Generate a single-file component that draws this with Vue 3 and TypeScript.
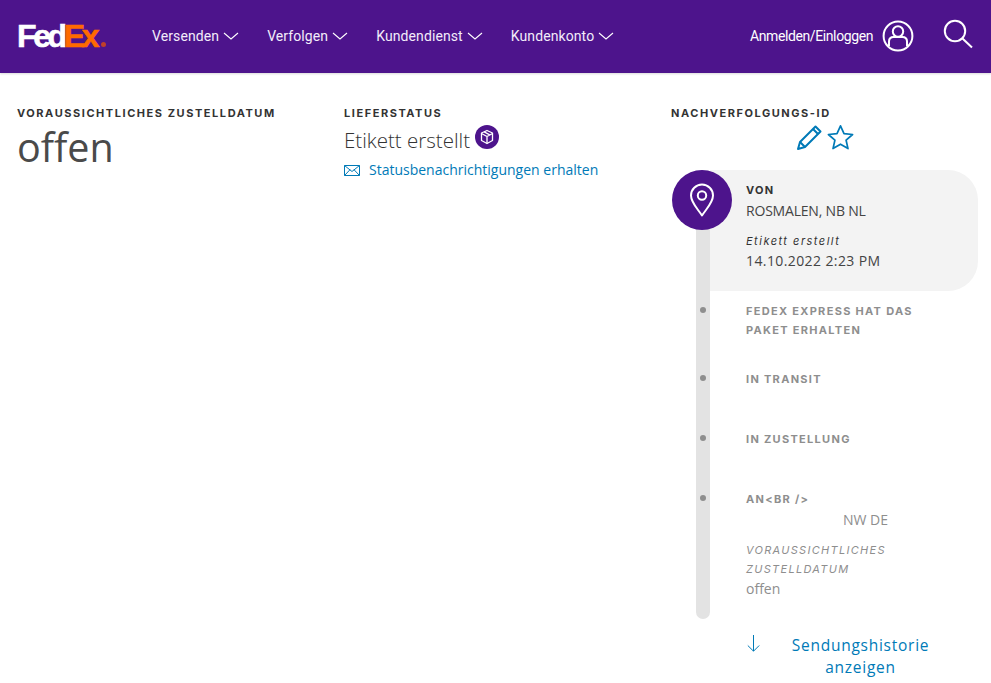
<script setup lang="ts">
const navItems: string[] = ['Versenden', 'Verfolgen', 'Kundendienst', 'Kundenkonto']
</script>

<template>
  <div class="page">
    <header class="header">
      <div class="logo"><span class="fed">Fed</span><span class="ex">Ex</span><span class="reg"></span></div>
      <nav class="nav">
        <a v-for="item in navItems" :key="item" class="nav-item">
          {{ item }}
          <svg width="16" height="8" viewBox="0 0 16 8" fill="none" stroke="#fff" stroke-width="1.1"><path d="M1 1l7 6 7-6" /></svg>
        </a>
      </nav>
      <div class="account">
        <span class="login">Anmelden/Einloggen</span>
        <svg class="user" width="32" height="32" viewBox="0 0 32 32" fill="none" stroke="#fff" stroke-width="2">
          <circle cx="16" cy="16" r="14.4" />
          <circle cx="16" cy="11.5" r="5.2" />
          <path d="M7 26v-4.5c0-3 2.2-4.5 4.6-4.5h8.8c2.400 0 4.600 1.500 4.600 4.500V26" />
        </svg>
        <svg class="search" width="30" height="30" viewBox="0 0 30 30" fill="none" stroke="#fff" stroke-width="2">
          <circle cx="12" cy="12" r="10.200" />
          <path d="M19.500 19.500L29 28.500" />
        </svg>
      </div>
    </header>

    <main class="content">
      <section class="col">
        <h2 class="label">VORAUSSICHTLICHES ZUSTELLDATUM</h2>
        <p class="big">offen</p>
      </section>

      <section class="col">
        <h2 class="label">LIEFERSTATUS</h2>
        <div class="status">
          <span>Etikett erstellt</span>
          <span class="badge">
            <svg width="16" height="16" viewBox="0 0 16 16" fill="none" stroke="#fff" stroke-width="1.300" stroke-linejoin="round">
              <path d="M8 1.500l5.500 2.500v7.500L8 14.500l-5.500-3V4z" />
              <path d="M2.500 4.500L8 7.500l5.500-3M8 7.500v7M5.200 2.900l5.500 3" />
            </svg>
          </span>
        </div>
        <a class="notify">
          <svg width="16" height="11" viewBox="0 0 16 11" fill="none" stroke="#007ab7" stroke-width="1"><path d="M.5.500h15v10H.5zM.5.500L8 6.500l7.500-6M.5 10.500l5.500-5.800M15.500 10.500L10 4.700" /></svg>
          Statusbenachrichtigungen erhalten
        </a>
      </section>

      <section class="col">
        <h2 class="label">NACHVERFOLGUNGS-ID</h2>
        <div class="tools">
          <svg width="27" height="27" viewBox="0 0 27 27" fill="none" stroke="#007ab7" stroke-width="2" stroke-linejoin="round">
            <path d="M2 25l2-7L19.500 2.500l5 5L9 23z" />
            <path d="M4 18l5 5M17 5l5 5" />
          </svg>
          <svg width="27" height="26" viewBox="0 0 27 26" fill="none" stroke="#007ab7" stroke-width="1.700" stroke-linejoin="round">
            <path d="M13.500 1.800l3.500 7.900 8.600.8-6.500 5.700 1.900 8.400-7.500-4.400-7.500 4.400 1.900-8.400-6.500-5.700 8.600-.8z" />
          </svg>
        </div>

        <div class="timeline">
          <div class="pin">
            <svg width="26" height="34" viewBox="0 0 26 34" fill="none" stroke="#fff" stroke-width="2">
              <path d="M13 32.500C8 25 2 19.500 2 12.500a11 11 0 0 1 22 0C24 19.500 18 25 13 32.500z" stroke-linejoin="round" />
              <circle cx="13" cy="12.500" r="4.200" />
            </svg>
          </div>

          <div class="card">
            <h3 class="step-title dark">VON</h3>
            <p class="place">ROSMALEN, NB NL</p>
            <p class="note">Etikett erstellt</p>
            <p class="date">14.10.2022 2:23 PM</p>
          </div>

          <div class="step first">
            <h3 class="step-title">FEDEX EXPRESS HAT DAS<br />PAKET ERHALTEN</h3>
          </div>
          <div class="step">
            <h3 class="step-title">IN TRANSIT</h3>
          </div>
          <div class="step">
            <h3 class="step-title">IN ZUSTELLUNG</h3>
          </div>
          <div class="step last">
            <h3 class="step-title">AN&lt;BR /&gt;</h3>
            <p class="dest">NW DE</p>
            <p class="dest-label">VORAUSSICHTLICHES<br />ZUSTELLDATUM</p>
            <p class="dest-val">offen</p>
          </div>
        </div>

        <div class="history">
          <svg width="13" height="17" viewBox="0 0 13 17" fill="none" stroke="#007ab7" stroke-width="1"><path d="M6.500 0v16M.8 10.500l5.700 5.700 5.700-5.700" /></svg>
          <a class="history-link">Sendungshistorie anzeigen</a>
        </div>
      </section>
    </main>
  </div>
</template>

<style>
html, body { margin: 0; background: #fff; }
</style>

<style scoped>
.page {
  width: 991px;
  height: 683px;
  overflow: hidden;
  font-family: "Open Sans", sans-serif;
  color: #333;
}
.header {
  height: 73px;
  background: #4d148c;
  display: flex;
  align-items: center;
  box-shadow: 0 1px 2px rgba(0, 0, 0, 0.15);
  padding: 0 18px 2px 17px;
  box-sizing: border-box;
  color: #fff;
}
.logo {
  width: 135px;
  font-family: "Liberation Sans", sans-serif;
  font-weight: 700;
  font-size: 32px;
  letter-spacing: -3.400px;
  line-height: 1;
  display: flex;
  align-items: baseline;
  -webkit-text-stroke: 0.6px currentColor;
}
.fed { color: #fff; }
.ex { color: #ff6a00; }
.reg {
  width: 5px;
  height: 5px;
  border-radius: 50%;
  background: #c0402a;
  margin-left: 5px;
}
.nav { display: flex; gap: 28px; }
.nav-item {
  display: flex;
  align-items: center;
  gap: 4px;
  font-family: Roboto, sans-serif;
  font-size: 14px;
  font-weight: 400;
  letter-spacing: 0.100px;
  color: #f3ecfa;
}
.account {
  margin-left: auto;
  display: flex;
  align-items: center;
}
.login {
  font-family: Roboto, sans-serif;
  font-size: 14px;
  font-weight: 400;
  letter-spacing: -0.400px;
  margin-right: 9px;
}
.user { margin-right: 29px; }
.search { margin-bottom: 3px; }
.content {
  display: grid;
  grid-template-columns: 327px 327px 1fr;
  padding: 33px 13px 0 17px;
}
.col { min-width: 0; }
.label {
  margin: 0;
  font-family: Inter, sans-serif;
  font-size: 11px;
  line-height: 15px;
  font-weight: 700;
  letter-spacing: 1.550px;
  color: #333;
}
.big {
  margin: 3px 0 0;
  font-size: 39.500px;
  line-height: 46px;
  color: #4a4a4a;
}
.status {
  display: flex;
  align-items: flex-start;
  gap: 5px;
  margin-top: 6px;
  font-size: 20.500px;
  font-weight: 300;
  line-height: 26px;
  color: #333;
}
.badge {
  width: 24px;
  height: 24px;
  margin-top: -2px;
  border-radius: 50%;
  background: #4d148c;
  display: flex;
  align-items: center;
  justify-content: center;
}
.notify {
  display: flex;
  align-items: center;
  gap: 9px;
  margin-top: 7px;
  font-size: 14px;
  line-height: 20px;
  color: #007ab7;
}
.tools {
  display: flex;
  justify-content: center;
  gap: 4px;
  height: 30px;
  padding-top: 3px;
}
.timeline {
  position: relative;
  margin-top: 16px;
  padding-bottom: 19px;
}
.timeline::before {
  content: "";
  position: absolute;
  left: 25px;
  top: 30px;
  bottom: 0;
  width: 14px;
  background: #e3e3e3;
  border-radius: 0 0 7px 7px;
}
.pin {
  position: absolute;
  z-index: 2;
  left: 1px;
  top: 0;
  width: 60px;
  height: 60px;
  border-radius: 50%;
  background: #4d148c;
  display: flex;
  align-items: center;
  justify-content: center;
}
.card {
  position: relative;
  margin-left: 39px;
  height: 121px;
  box-sizing: border-box;
  padding: 11px 0 0 36px;
  background: #f3f3f3;
  border-radius: 0 30px 30px 0;
}
.card p { margin: 0; }
.step-title {
  margin: 0;
  font-family: Inter, sans-serif;
  font-size: 11px;
  line-height: 19px;
  font-weight: 700;
  letter-spacing: 1.300px;
  color: #8e8e8e;
}
.step-title.dark { color: #333; }
.place {
  font-size: 14px;
  line-height: 22px;
  letter-spacing: -0.200px;
  color: #444;
}
.note {
  font-family: Inter, sans-serif;
  font-size: 11px;
  line-height: 18px;
  font-style: italic;
  letter-spacing: 1.500px;
  color: #333;
  margin-top: 10px !important;
}
.date {
  font-size: 14px;
  line-height: 22px;
  letter-spacing: 0.400px;
  color: #444;
}
.step {
  position: relative;
  padding: 0 0 41px 75px;
}
.step.first { padding-top: 11px; padding-bottom: 30px; }
.step.last { padding-bottom: 1px; }
.step::before {
  content: "";
  position: absolute;
  z-index: 1;
  left: 29px;
  top: 5px;
  width: 6px;
  height: 6px;
  border-radius: 50%;
  background: #8e8e8e;
}
.step.first::before { top: 16px; }
.step p { margin: 0; }
.dest {
  font-size: 14px;
  line-height: 22px;
  padding-left: 97px;
  color: #8e8e8e;
}
.dest-label {
  font-family: Inter, sans-serif;
  font-size: 11px;
  line-height: 19px;
  font-style: italic;
  letter-spacing: 1.300px;
  color: #8e8e8e;
  margin-top: 10px !important;
}
.dest-val {
  font-size: 14px;
  line-height: 20px;
  color: #8e8e8e;
}
.history {
  display: flex;
  align-items: flex-start;
  padding-left: 76px;
  margin-top: 16px;
}
.history svg { flex: none; }
.history-link {
  width: 157px;
  margin-left: 22px;
  text-align: center;
  font-size: 15.500px;
  line-height: 21.500px;
  letter-spacing: 0.750px;
  color: #007ab7;
}
</style>
